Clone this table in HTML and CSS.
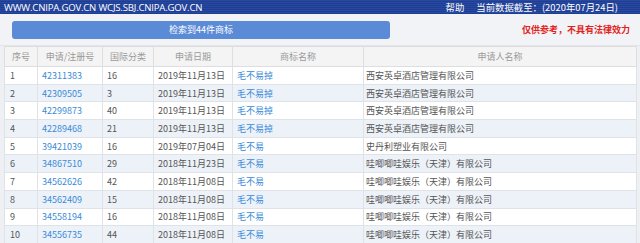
FILE: index.html
```html
<!DOCTYPE html>
<html lang="zh">
<head>
<meta charset="utf-8">
<link rel="stylesheet" href="styles.css">
</head>
<body>
<div class="topbar">
  <span class="site">WWW.CNIPA.GOV.CN WCJS.SBJ.CNIPA.GOV.CN</span>
  <span class="right"><span class="help">帮助</span><span class="date">当前数据截至：(2020年07月24日)</span></span>
</div>
<div class="toolbar">
  <div class="btn">检索到44件商标</div>
  <div class="notice">仅供参考，不具有法律效力</div>
</div>
<table class="grid">
  <colgroup>
    <col class="c1"><col class="c2"><col class="c3"><col class="c4"><col class="c5"><col class="c6">
  </colgroup>
  <thead>
    <tr><th>序号</th><th>申请/注册号</th><th>国际分类</th><th>申请日期</th><th>商标名称</th><th>申请人名称</th></tr>
  </thead>
  <tbody>
    <tr><td>1</td><td class="lk">42311383</td><td>16</td><td>2019年11月13日</td><td class="lk">毛不易掉</td><td>西安英卓酒店管理有限公司</td></tr>
    <tr><td>2</td><td class="lk">42309505</td><td>3</td><td>2019年11月13日</td><td class="lk">毛不易掉</td><td>西安英卓酒店管理有限公司</td></tr>
    <tr><td>3</td><td class="lk">42299873</td><td>40</td><td>2019年11月13日</td><td class="lk">毛不易掉</td><td>西安英卓酒店管理有限公司</td></tr>
    <tr><td>4</td><td class="lk">42289468</td><td>21</td><td>2019年11月13日</td><td class="lk">毛不易掉</td><td>西安英卓酒店管理有限公司</td></tr>
    <tr><td>5</td><td class="lk">39421039</td><td>16</td><td>2019年07月04日</td><td class="lk">毛不易</td><td>史丹利塑业有限公司</td></tr>
    <tr><td>6</td><td class="lk">34867510</td><td>29</td><td>2018年11月23日</td><td class="lk">毛不易</td><td>哇唧唧哇娱乐（天津）有限公司</td></tr>
    <tr><td>7</td><td class="lk">34562626</td><td>42</td><td>2018年11月08日</td><td class="lk">毛不易</td><td>哇唧唧哇娱乐（天津）有限公司</td></tr>
    <tr><td>8</td><td class="lk">34562409</td><td>15</td><td>2018年11月08日</td><td class="lk">毛不易</td><td>哇唧唧哇娱乐（天津）有限公司</td></tr>
    <tr><td>9</td><td class="lk">34558194</td><td>16</td><td>2018年11月08日</td><td class="lk">毛不易</td><td>哇唧唧哇娱乐（天津）有限公司</td></tr>
    <tr><td>10</td><td class="lk">34556735</td><td>44</td><td>2018年11月08日</td><td class="lk">毛不易</td><td>哇唧唧哇娱乐（天津）有限公司</td></tr>
  </tbody>
</table>
</body>
</html>
```
FILE: styles.css
```css
html, body {
  margin: 0;
  padding: 0;
  background: #eef0f3;
  font-family: "Noto Sans CJK SC", "Noto Sans", sans-serif;
  font-size: 9px;
  color: #555;
  overflow: hidden;
}
.topbar {
  height: 14px;
  display: flex;
  align-items: center;
  justify-content: space-between;
  padding: 0 22px 0 4px;
  background: #1d3e96 repeating-linear-gradient(180deg, rgba(255,255,255,0.06) 0 1px, rgba(0,0,0,0) 1px 2px);
  color: #fff;
}
.site {
  font-family: "Open Sans", "Noto Sans", sans-serif;
  font-size: 9.6px;
  letter-spacing: -0.2px;
}
.right {
  display: flex;
  gap: 12px;
  font-size: 9.4px;
}
.toolbar {
  height: 32px;
  display: flex;
  align-items: center;
  justify-content: space-between;
  padding: 0 10px 0 12px;
  box-sizing: border-box;
  background: #f2f3f6;
  border-bottom: 1px solid #e3e5e8;
}
.btn {
  width: 378px;
  height: 18px;
  line-height: 18px;
  background: #5b8bd7;
  border-radius: 3px;
  color: #fff;
  text-align: center;
  font-size: 9px;
}
.notice {
  color: #e2221d;
  font-weight: bold;
  font-size: 9px;
}
.grid {
  margin: 0 4px;
  width: 632px;
  border-collapse: collapse;
  table-layout: fixed;
  background: #fff;
}
.c1 { width: 33px; }
.c2 { width: 65px; }
.c3 { width: 51px; }
.c4 { width: 79px; }
.c5 { width: 131px; }
.c6 { width: 273px; }
.grid th {
  height: 19px;
  padding: 0;
  font-weight: normal;
  color: #9a9a9a;
  background: #f4f4f4;
  border: 1px solid #dedede;
  text-align: center;
}
.grid td {
  height: 16.7px;
  padding: 0 4px;
  border: 1px solid #dfe3e8;
  white-space: nowrap;
  overflow: hidden;
  color: #555;
}
.grid tbody tr:nth-child(even) td {
  background: #edf2f8;
}
.grid td.lk {
  color: #3a8ad8;
}
.grid td:first-child { padding-left: 5px; }
.grid td:last-child { padding-left: 2px; }
```
